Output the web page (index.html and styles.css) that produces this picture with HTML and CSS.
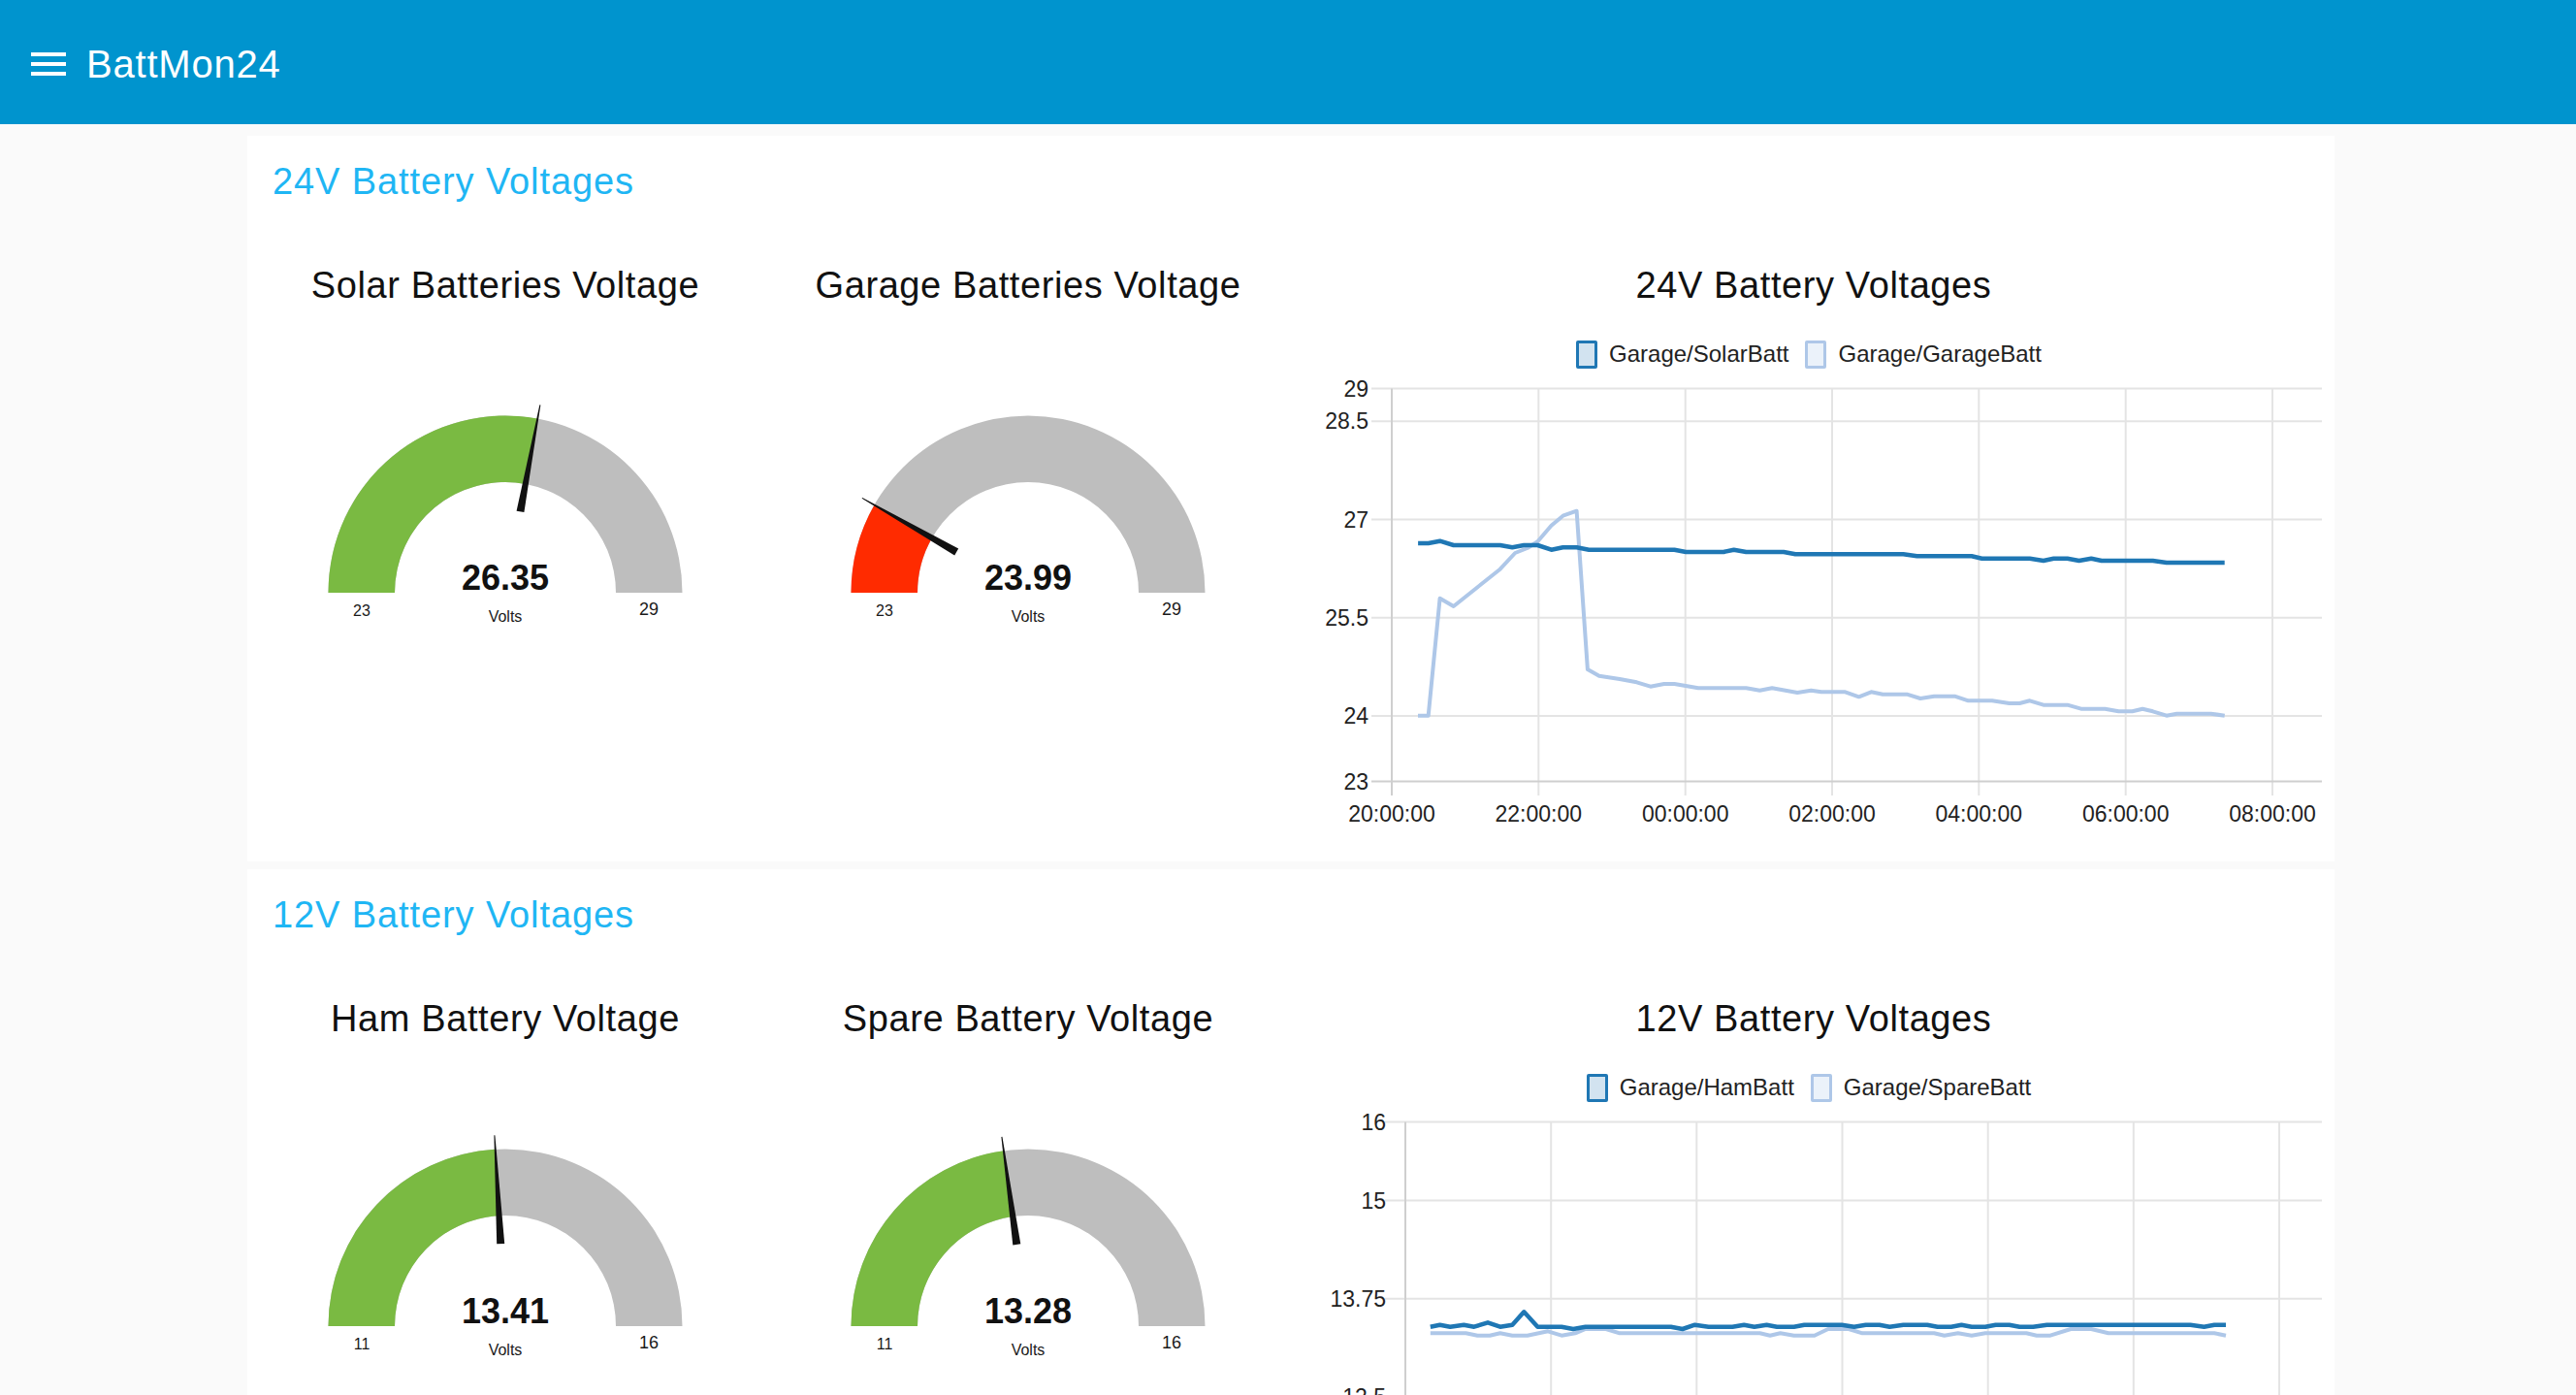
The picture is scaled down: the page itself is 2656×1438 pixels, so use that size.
FILE: index.html
```html
<!DOCTYPE html>
<html lang="en">
<head>
<meta charset="utf-8">
<title>BattMon24</title>
<link rel="stylesheet" href="styles.css">
</head>
<body>
<header class="toolbar">
  <div class="menu-icon"><span></span><span></span><span></span></div>
  <h1 class="app-title">BattMon24</h1>
</header>
<main class="content">
  <section class="group">
    <h2 class="group-title">24V Battery Voltages</h2>
    <div class="widgets">
      <div class="gauge-widget">
        <h3 class="widget-title">Solar Batteries Voltage</h3>
        <svg class="gauge" viewBox="0 0 508 340" width="508" height="340">
          <path class="g-track" d="M71.5,293 A182.5,182.5 0 0 1 436.5,293 L368,293 A114,114 0 0 0 140,293 Z"/>
          <path class="g-ok" d="M71.5,293 A182.5,182.5 0 0 1 287.25,113.55 L274.77,180.9 A114,114 0 0 0 140,293 Z"/>
          <polygon class="g-needle" points="273.4,210.1 265.6,208.7 289.4,99.2 290.4,99.4"/>
          <text class="g-value" x="254" y="290">26.35</text>
          <text class="g-min" x="106" y="317">23</text>
          <text class="g-max" x="402" y="316">29</text>
          <text class="g-unit" x="254" y="323">Volts</text>
        </svg>
      </div>
      <div class="gauge-widget">
        <h3 class="widget-title">Garage Batteries Voltage</h3>
        <svg class="gauge" viewBox="0 0 508 340" width="508" height="340">
          <path class="g-track" d="M71.5,293 A182.5,182.5 0 0 1 436.5,293 L368,293 A114,114 0 0 0 140,293 Z"/>
          <path class="g-low" d="M71.5,293 A182.5,182.5 0 0 1 95.5,202.6 L155,236.5 A114,114 0 0 0 140,293 Z"/>
          <polygon class="g-needle" points="182.2,247.4 178.2,254.4 82.65,195.83 83.15,194.97"/>
          <text class="g-value" x="254" y="290">23.99</text>
          <text class="g-min" x="106" y="317">23</text>
          <text class="g-max" x="402" y="316">29</text>
          <text class="g-unit" x="254" y="323">Volts</text>
        </svg>
      </div>
      <div class="chart-widget">
        <h3 class="widget-title">24V Battery Voltages</h3>
        <div class="legend">
          <span class="legend-item"><i class="swatch swatch-dark"></i>Garage/SolarBatt</span>
          <span class="legend-item"><i class="swatch swatch-light"></i>Garage/GarageBatt</span>
        </div>
        <svg class="chart" viewBox="0 0 1050 490" width="1050" height="490">
          <g class="grid">
            <line x1="69" y1="20.5" x2="1049" y2="20.5"/>
            <line x1="69" y1="54.25" x2="1049" y2="54.25"/>
            <line x1="69" y1="155.5" x2="1049" y2="155.5"/>
            <line x1="69" y1="256.75" x2="1049" y2="256.75"/>
            <line x1="69" y1="358" x2="1049" y2="358"/>
            <line x1="241.3" y1="20.5" x2="241.3" y2="440"/>
            <line x1="392.7" y1="20.5" x2="392.7" y2="440"/>
            <line x1="544" y1="20.5" x2="544" y2="440"/>
            <line x1="695.3" y1="20.5" x2="695.3" y2="440"/>
            <line x1="846.7" y1="20.5" x2="846.7" y2="440"/>
            <line x1="998" y1="20.5" x2="998" y2="440"/>
          </g>
          <g class="axis">
            <line x1="69" y1="425.5" x2="1049" y2="425.5"/>
            <line x1="90" y1="20.5" x2="90" y2="440"/>
          </g>
          <g class="y-labels">
            <text x="66" y="28.5">29</text>
            <text x="66" y="62.25">28.5</text>
            <text x="66" y="163.5">27</text>
            <text x="66" y="264.75">25.5</text>
            <text x="66" y="366">24</text>
            <text x="66" y="433.5">23</text>
          </g>
          <g class="x-labels">
            <text x="90" y="467">20:00:00</text>
            <text x="241.3" y="467">22:00:00</text>
            <text x="392.7" y="467">00:00:00</text>
            <text x="544" y="467">02:00:00</text>
            <text x="695.3" y="467">04:00:00</text>
            <text x="846.7" y="467">06:00:00</text>
            <text x="998" y="467">08:00:00</text>
          </g>
          <polyline class="series-light" points="117,357.7 127.7,357.7 139.6,236.7 153.7,245 201.7,206.7 217.2,190 229.8,185 240.4,178.3 254.5,161.7 266.5,151.7 280.6,146.7 291.9,310 303.8,316.7 325,320 342.6,323.3 356.7,327.7 370.8,325 381.4,325 406,329.3 455.4,329.3 469.4,331.7 482.1,329.3 508.2,334 522.3,331.7 532.9,333.3 557.5,333.3 571.6,338.3 584.3,333.3 596.3,335.7 621,335.7 635,340 649.2,337.7 670.3,337.7 684.4,342.3 709,342.3 726.7,345 737.3,345 747.8,342.3 761.9,346.7 786.6,346.7 800.7,350.7 825.4,350.7 839.4,353.3 853.5,353.3 864.1,350.7 874.7,353.3 888.8,357.7 899.4,355.7 934.6,355.7 948.7,357.7"/>
          <polyline class="series-dark" points="117.1,180 127.7,180 139.6,177.7 153.7,182 201.7,182 214.3,184.3 226.3,182 240.4,182 254.5,186.7 266.5,184.3 280.6,184.3 293.3,186.7 381.4,186.7 393.3,189 432.1,189 442.7,186.7 455.4,189 494.1,189 506.1,191.3 617.4,191.3 631.5,193.3 687.9,193.3 698.5,195.7 747.8,195.7 761.9,198 772.5,195.7 786.6,195.7 798.6,198 811.2,195.7 821.8,198 874.7,198 888.8,200 948.7,200"/>
        </svg>
      </div>
    </div>
  </section>

  <section class="group">
    <h2 class="group-title">12V Battery Voltages</h2>
    <div class="widgets">
      <div class="gauge-widget">
        <h3 class="widget-title">Ham Battery Voltage</h3>
        <svg class="gauge" viewBox="0 0 508 340" width="508" height="340">
          <path class="g-track" d="M71.5,293 A182.5,182.5 0 0 1 436.5,293 L368,293 A114,114 0 0 0 140,293 Z"/>
          <path class="g-ok" d="M71.5,293 A182.5,182.5 0 0 1 243.7,110.8 L247.56,179.2 A114,114 0 0 0 140,293 Z"/>
          <polygon class="g-needle" points="253.2,207.9 245.2,208.3 242.4,96.33 243.4,96.27"/>
          <text class="g-value" x="254" y="290">13.41</text>
          <text class="g-min" x="106" y="317">11</text>
          <text class="g-max" x="402" y="316">16</text>
          <text class="g-unit" x="254" y="323">Volts</text>
        </svg>
      </div>
      <div class="gauge-widget">
        <h3 class="widget-title">Spare Battery Voltage</h3>
        <svg class="gauge" viewBox="0 0 508 340" width="508" height="340">
          <path class="g-track" d="M71.5,293 A182.5,182.5 0 0 1 436.5,293 L368,293 A114,114 0 0 0 140,293 Z"/>
          <path class="g-ok" d="M71.5,293 A182.5,182.5 0 0 1 228.85,112.2 L238.3,180.1 A114,114 0 0 0 140,293 Z"/>
          <polygon class="g-needle" points="246.3,208.3 238.3,209.4 226.4,97.97 227.4,97.83"/>
          <text class="g-value" x="254" y="290">13.28</text>
          <text class="g-min" x="106" y="317">11</text>
          <text class="g-max" x="402" y="316">16</text>
          <text class="g-unit" x="254" y="323">Volts</text>
        </svg>
      </div>
      <div class="chart-widget">
        <h3 class="widget-title">12V Battery Voltages</h3>
        <div class="legend">
          <span class="legend-item"><i class="swatch swatch-dark"></i>Garage/HamBatt</span>
          <span class="legend-item"><i class="swatch swatch-light"></i>Garage/SpareBatt</span>
        </div>
        <svg class="chart" viewBox="0 0 1050 490" width="1050" height="490">
          <g class="grid">
            <line x1="83" y1="20.5" x2="1049" y2="20.5"/>
            <line x1="83" y1="101.5" x2="1049" y2="101.5"/>
            <line x1="83" y1="202.75" x2="1049" y2="202.75"/>
            <line x1="83" y1="304" x2="1049" y2="304"/>
            <line x1="254.2" y1="20.5" x2="254.2" y2="440"/>
            <line x1="404.3" y1="20.5" x2="404.3" y2="440"/>
            <line x1="554.5" y1="20.5" x2="554.5" y2="440"/>
            <line x1="704.7" y1="20.5" x2="704.7" y2="440"/>
            <line x1="854.8" y1="20.5" x2="854.8" y2="440"/>
            <line x1="1005" y1="20.5" x2="1005" y2="440"/>
          </g>
          <g class="axis">
            <line x1="83" y1="425.5" x2="1049" y2="425.5"/>
            <line x1="104" y1="20.5" x2="104" y2="440"/>
          </g>
          <g class="y-labels">
            <text x="84" y="28.5">16</text>
            <text x="84" y="109.5">15</text>
            <text x="84" y="210.75">13.75</text>
            <text x="84" y="312">12.5</text>
            <text x="84" y="433.5">11</text>
          </g>
          <g class="x-labels">
            <text x="104" y="467">20:00:00</text>
            <text x="254.2" y="467">22:00:00</text>
            <text x="404.3" y="467">00:00:00</text>
            <text x="554.5" y="467">02:00:00</text>
            <text x="704.7" y="467">04:00:00</text>
            <text x="854.8" y="467">06:00:00</text>
            <text x="1005" y="467">08:00:00</text>
          </g>
          <polyline class="series-light" points="129.8,238.3 166.4,238.3 178.4,240.7 191.1,240.7 201.7,238.3 214.3,240.7 229.8,240.7 251,236.3 265.1,240.7 279.2,238.3 289.7,234 310.9,234 325,238.3 469.5,238.3 480,240.7 490.6,238.3 504.7,240.7 525.8,240.7 539.9,234 561.1,234 575.2,238.3 649.2,238.3 659.7,240.7 673.8,238.3 687.9,240.7 702,238.3 744.3,238.3 754.9,240.7 769,240.7 790.1,234 811.2,234 828.9,238.3 938.1,238.3 950,240.7"/>
          <polyline class="series-dark" points="129.8,231.7 139.6,229.7 150.2,231.7 164.3,229.7 174.9,231.7 189,227.3 201.7,231.7 214.3,229.7 226.3,216.3 240.4,231.7 265.1,231.7 277.1,234 289.7,231.7 377.8,231.7 389.8,234 402.5,229.7 416.6,231.7 441.3,231.7 453.2,229.7 463.8,231.7 476.5,229.7 487.1,231.7 504.7,231.7 515.3,229.7 554,229.7 566.7,231.7 578.7,229.7 592.8,229.7 603.3,231.7 617.4,229.7 642.1,229.7 652.7,231.7 666.8,231.7 677.4,229.7 687.9,231.7 702,231.7 712.6,229.7 726.7,229.7 737.3,231.7 751.3,231.7 765.4,229.7 913.4,229.7 927.5,231.7 938.1,229.7 950,229.7"/>
        </svg>
      </div>
    </div>
  </section>
</main>
</body>
</html>
```
FILE: styles.css
```css
html, body {
  margin: 0;
  height: 100%;
  overflow: hidden;
  background: #fafafa;
  font-family: "Liberation Sans", Arial, Helvetica, sans-serif;
}

.toolbar {
  box-sizing: border-box;
  height: 128px;
  background: #0094ce;
  color: #ffffff;
  display: flex;
  align-items: center;
  padding: 3px 0 0 32px;
}

.menu-icon {
  width: 36px;
  display: flex;
  flex-direction: column;
  gap: 6px;
  margin-right: 21px;
}

.menu-icon span {
  display: block;
  height: 4px;
  background: #ffffff;
}

.app-title {
  margin: 0;
  font-size: 40px;
  line-height: 48px;
  font-weight: 400;
  letter-spacing: 0.8px;
}

.content {
  padding: 12px 0 0 255px;
}

.group {
  box-sizing: border-box;
  width: 2152px;
  background: #ffffff;
  padding: 23px 12px 18px;
}

.group + .group {
  margin-top: 8px;
}

.group-title {
  margin: 0 0 59px 14px;
  font-size: 38px;
  line-height: 48px;
  font-weight: 400;
  letter-spacing: 0.9px;
  color: #1fb6f4;
}

.widgets {
  display: grid;
  grid-template-columns: 508px 508px 1050px;
  column-gap: 31px;
  align-items: start;
}

.widget-title {
  margin: 0;
  font-size: 38px;
  line-height: 48px;
  font-weight: 400;
  letter-spacing: 0.6px;
  text-align: center;
  color: #111111;
}

.gauge,
.chart {
  display: block;
}

.g-track { fill: #bebebe; }
.g-ok { fill: #7aba42; }
.g-low { fill: #ff2b00; }
.g-needle { fill: #111111; }

.g-value {
  font-size: 36px;
  font-weight: 700;
  fill: #111111;
  text-anchor: middle;
}

.g-min,
.g-max,
.g-unit {
  fill: #1a1a1a;
  text-anchor: middle;
}

.g-min { font-size: 16px; }
.g-max { font-size: 18px; }
.g-unit { font-size: 16px; }

.legend {
  display: flex;
  justify-content: center;
  gap: 17px;
  height: 30px;
  margin-top: 32px;
  padding-right: 10px;
  font-size: 24px;
  line-height: 30px;
  color: #222222;
}

.legend-item {
  display: flex;
  align-items: center;
  gap: 12px;
  white-space: nowrap;
}

.swatch {
  box-sizing: border-box;
  display: block;
  width: 22px;
  height: 29px;
  border-radius: 2px;
  border: 3px solid #1f77b4;
  background: #d2e3f0;
}

.swatch-light {
  border-color: #aec7e8;
  background: #ebf2fa;
}

.grid line {
  stroke: #e4e4e4;
  stroke-width: 2;
}

.axis line {
  stroke: #cfcfcf;
  stroke-width: 2;
}

.y-labels text {
  font-size: 23px;
  fill: #222222;
  text-anchor: end;
}

.x-labels text {
  font-size: 23px;
  fill: #222222;
  text-anchor: middle;
}

.series-dark,
.series-light {
  fill: none;
  stroke-linejoin: round;
  stroke-linecap: butt;
}

.series-dark {
  stroke: #1f77b4;
  stroke-width: 4.5;
}

.series-light {
  stroke: #aec7e8;
  stroke-width: 4;
}
```
